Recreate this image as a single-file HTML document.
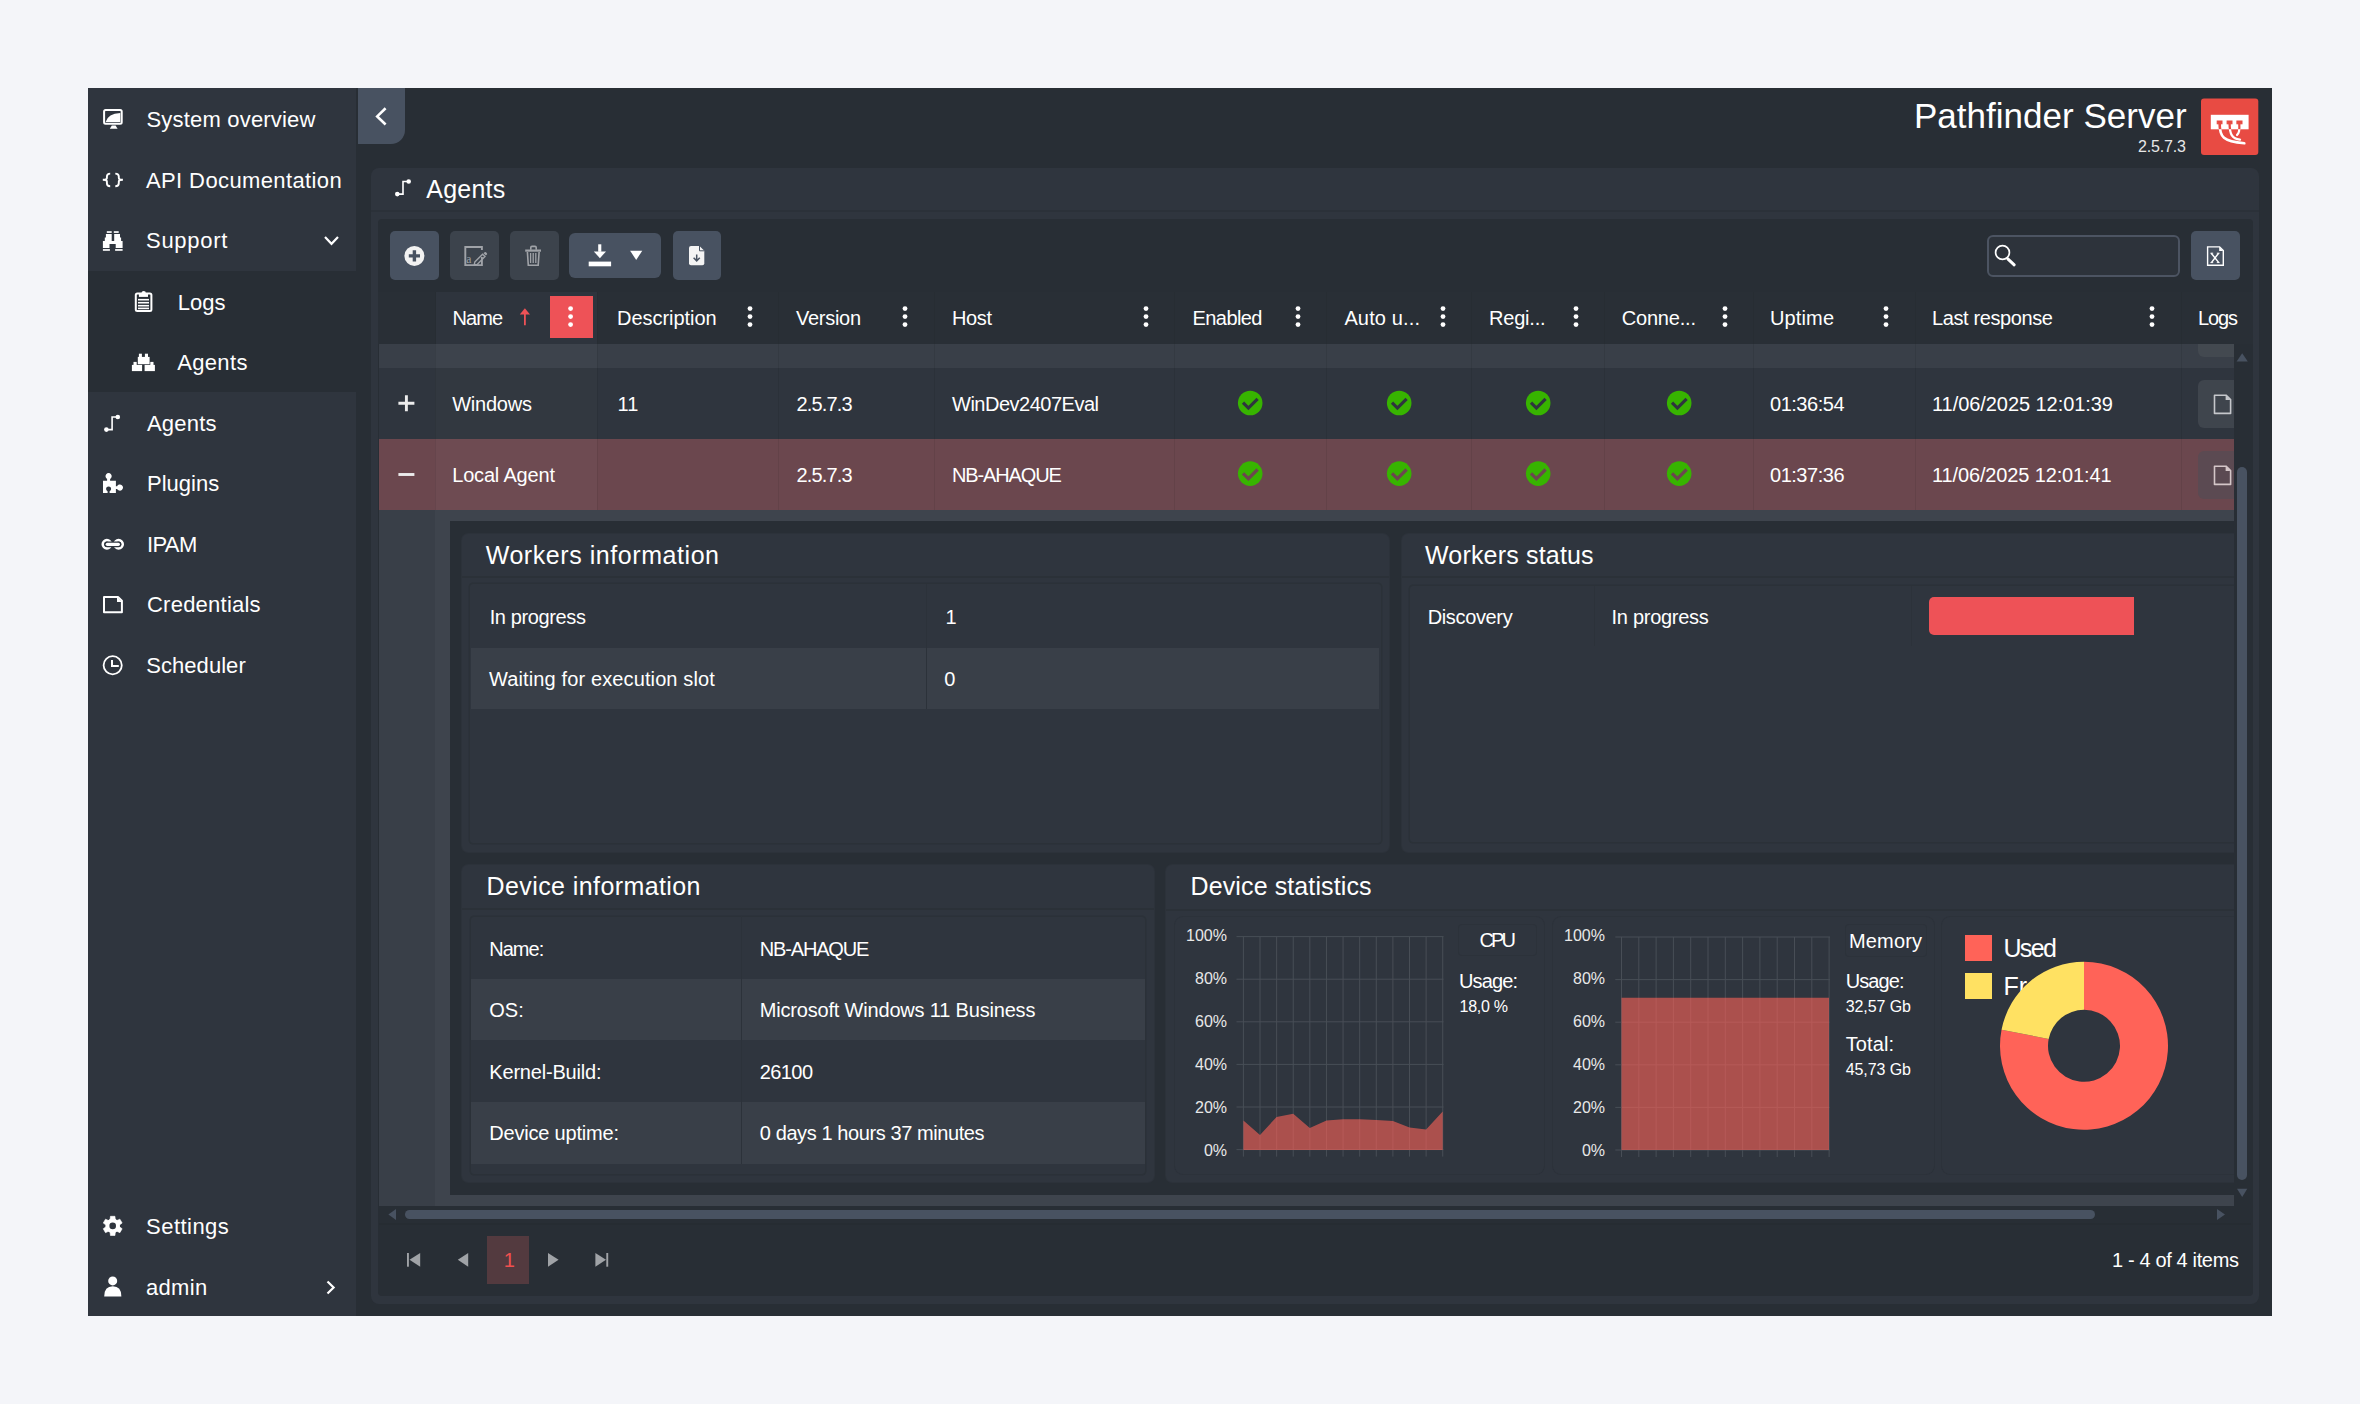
<!DOCTYPE html>
<html><head><meta charset="utf-8"><style>
html,body{margin:0;padding:0;}
body{width:2360px;height:1404px;overflow:hidden;position:relative;background:#f4f5f9;font-family:"Liberation Sans",sans-serif;}
body>div,body>svg{position:absolute;}
.t{white-space:nowrap;}
</style></head><body>
<div style="left:88px;top:88px;width:2184px;height:1228px;background:#282e35;"></div>
<div style="left:88px;top:88px;width:268px;height:1228px;background:#2f353e;"></div>
<div style="left:88px;top:271px;width:268px;height:121px;background:#282e35;"></div>
<div class="t" style="left:146.50px;top:109px;font-size:22px;line-height:22px;color:#fff;letter-spacing:0.189px;">System overview</div>
<div class="t" style="left:146.00px;top:170px;font-size:22px;line-height:22px;color:#fff;letter-spacing:0.384px;">API Documentation</div>
<div class="t" style="left:146.00px;top:230px;font-size:22px;line-height:22px;color:#fff;letter-spacing:0.708px;">Support</div>
<div class="t" style="left:147.00px;top:413px;font-size:22px;line-height:22px;color:#fff;letter-spacing:0.200px;">Agents</div>
<div class="t" style="left:147.00px;top:473px;font-size:22px;line-height:22px;color:#fff;">Plugins</div>
<div class="t" style="left:147.00px;top:534px;font-size:22px;line-height:22px;color:#fff;letter-spacing:-0.650px;">IPAM</div>
<div class="t" style="left:147.00px;top:594px;font-size:22px;line-height:22px;color:#fff;letter-spacing:0.230px;">Credentials</div>
<div class="t" style="left:146.30px;top:655px;font-size:22px;line-height:22px;color:#fff;letter-spacing:0.044px;">Scheduler</div>
<div class="t" style="left:146.10px;top:1216px;font-size:22px;line-height:22px;color:#fff;letter-spacing:0.457px;">Settings</div>
<div class="t" style="left:146.10px;top:1277px;font-size:22px;line-height:22px;color:#fff;letter-spacing:0.275px;">admin</div>
<div class="t" style="left:177.80px;top:292px;font-size:22px;line-height:22px;color:#fff;">Logs</div>
<div class="t" style="left:177.20px;top:352px;font-size:22px;line-height:22px;color:#fff;letter-spacing:0.340px;">Agents</div>
<svg style="left:100px;top:106px;" width="26" height="26" viewBox="100 106 26 26"><rect x="104.1" y="110.1" width="17.6" height="13.6" rx="1.5" fill="none" stroke="#fff" stroke-width="2"/><path d="M105.6 121.9 Q108 113.5 120.3 112.9 V121.9 Z" fill="#fff"/><path d="M109.8 128.8 L111.8 125.4 H115.6 L117.6 128.8 Z" fill="#fff"/></svg>
<svg style="left:100px;top:170px;" width="26" height="20" viewBox="100 170 26 20"><path d="M110.2 173.6 Q106.9 173.6 106.9 176.6 V178 Q106.9 179.8 102.8 179.8 Q106.9 179.8 106.9 181.6 V183.2 Q106.9 186.2 110.2 186.2" fill="none" stroke="#fff" stroke-width="1.9"/><path d="M115.3 173.6 Q118.8 173.6 118.8 176.6 V178 Q118.8 179.8 122.9 179.8 Q118.8 179.8 118.8 181.6 V183.2 Q118.8 186.2 115.3 186.2" fill="none" stroke="#fff" stroke-width="1.9"/></svg>
<svg style="left:98px;top:225px;" width="30" height="30" viewBox="98 225 30 30"><g transform="translate(98 225)" fill="#fff"><rect x="8.8" y="6.2" width="4.9" height="1.7"/><rect x="15.8" y="6.2" width="4.9" height="1.7"/><path d="M7.9 9 H13.7 V16 H16.2 V9 H22 V12.4 H23.1 V16 H24.6 V23.1 H17.7 V19 H11.5 V23.1 H4.9 V16 H6.8 V12.4 H7.9 Z"/><rect x="4.9" y="24.1" width="7" height="1.7"/><rect x="17.1" y="24.1" width="7.5" height="1.7"/></g></svg>
<svg style="left:320px;top:232px;" width="24" height="18" viewBox="320 232 24 18"><path d="M325 237 L331.5 243.8 L338 237" fill="none" stroke="#fff" stroke-width="2.2"/></svg>
<svg style="left:128px;top:286px;" width="32" height="32" viewBox="128 286 32 32"><g transform="translate(128 286)"><rect x="7.8" y="7.4" width="15.6" height="17.6" rx="1.5" fill="none" stroke="#fff" stroke-width="2"/><circle cx="15.7" cy="7.2" r="2.2" fill="#fff"/><rect x="10.9" y="7.5" width="9.1" height="3.4" fill="#fff"/><rect x="10" y="12.9" width="11" height="1.6" fill="#fff"/><rect x="10" y="15.9" width="11" height="1.6" fill="#fff"/><rect x="10" y="18.9" width="11" height="1.6" fill="#fff"/><rect x="10" y="21.6" width="11" height="1.6" fill="#fff"/></g></svg>
<svg style="left:128px;top:346px;" width="32" height="32" viewBox="128 346 32 32"><g transform="translate(128 346)" fill="#fff"><rect x="9.8" y="10.9" width="11.8" height="7.3"/><rect x="10.9" y="7.7" width="3" height="3.3"/><rect x="16.9" y="7.7" width="3.1" height="3.3"/><rect x="3.9" y="18.9" width="10.2" height="6.2"/><rect x="5.5" y="15.9" width="3.2" height="3.1"/><rect x="16.6" y="18.9" width="10.3" height="6.2"/><rect x="22.3" y="15.9" width="3.2" height="3.1"/></g></svg>
<svg style="left:98px;top:408px;" width="28" height="28" viewBox="98 408 28 28"><g transform="translate(98 408) scale(1.0)"><path d="M8.4 21.6 H14.1 V9 H19.8" fill="none" stroke="#fff" stroke-width="1.6"/><circle cx="19.8" cy="9" r="2.3" fill="#fff"/><circle cx="8.4" cy="21.6" r="2.3" fill="#fff"/></g></svg>
<svg style="left:96px;top:468px;" width="34" height="34" viewBox="96 468 34 34"><g transform="translate(96 468)"><path fill="#fff" fill-rule="evenodd" d="M7 12.7 H11.1 V10.9 A3.1 3.1 0 1 1 14.1 10.9 V12.7 H19.9 V18.3 H21.1 A3.1 3.1 0 1 1 21.1 20.9 H19.9 V25.1 H13.6 V23.2 A2.5 2.5 0 1 0 11.6 23.2 V25.1 H7 Z"/></g></svg>
<svg style="left:96px;top:527px;" width="34" height="34" viewBox="96 527 34 34"><g transform="translate(96 527)"><circle cx="10.9" cy="17.25" r="4.1" fill="none" stroke="#fff" stroke-width="2.7"/><circle cx="22.6" cy="17.25" r="4.1" fill="none" stroke="#fff" stroke-width="2.7"/><rect x="8.3" y="14.4" width="17" height="5.8" rx="2.9" fill="#2f353e"/><rect x="9.7" y="15.7" width="14.3" height="3.3" rx="1.65" fill="#fff"/></g></svg>
<svg style="left:96px;top:587px;" width="34" height="34" viewBox="96 587 34 34"><g transform="translate(96 587)"><path d="M8 10 H22 L25.9 13.8 V25.2 H8 Z" fill="none" stroke="#fff" stroke-width="2" stroke-linejoin="round"/><path d="M21 10 L25.9 14.9 H21 Z" fill="#fff"/></g></svg>
<svg style="left:96px;top:648px;" width="34" height="34" viewBox="96 648 34 34"><g transform="translate(96 648)"><circle cx="16.7" cy="17.3" r="9.1" fill="none" stroke="#fff" stroke-width="1.8"/><path d="M16 11.9 V17.9 H22.8" fill="none" stroke="#fff" stroke-width="2"/></g></svg>
<svg style="left:96px;top:1209px;" width="34" height="34" viewBox="96 1209 34 34"><polygon points="110.05,1220.10 115.35,1220.10 114.95,1216.30 110.45,1216.30" fill="#fff" stroke="#fff" stroke-width="0.6" stroke-linejoin="round"/><polygon points="106.35,1225.29 109.00,1220.71 105.51,1219.15 103.26,1223.05" fill="#fff" stroke="#fff" stroke-width="0.6" stroke-linejoin="round"/><polygon points="109.00,1231.09 106.35,1226.51 103.26,1228.75 105.51,1232.65" fill="#fff" stroke="#fff" stroke-width="0.6" stroke-linejoin="round"/><polygon points="115.35,1231.70 110.05,1231.70 110.45,1235.50 114.95,1235.50" fill="#fff" stroke="#fff" stroke-width="0.6" stroke-linejoin="round"/><polygon points="119.05,1226.51 116.40,1231.09 119.89,1232.65 122.14,1228.75" fill="#fff" stroke="#fff" stroke-width="0.6" stroke-linejoin="round"/><polygon points="116.40,1220.71 119.05,1225.29 122.14,1223.05 119.89,1219.15" fill="#fff" stroke="#fff" stroke-width="0.6" stroke-linejoin="round"/><circle cx="112.7" cy="1225.9" r="5.3" fill="none" stroke="#fff" stroke-width="4"/></svg>
<svg style="left:96px;top:1270px;" width="34" height="34" viewBox="96 1270 34 34"><circle cx="112.7" cy="1280.9" r="4.5" fill="#fff"/><path d="M104.2 1296.4 Q104.2 1286.2 112.8 1286.2 Q121.4 1286.2 121.4 1296.4 Z" fill="#fff"/></svg>
<svg style="left:322px;top:1278px;" width="20" height="20" viewBox="322 1278 20 20"><path d="M327.5 1281.5 L333.6 1287.5 L327.5 1293.5" fill="none" stroke="#fff" stroke-width="2.2"/></svg>
<div style="left:358px;top:88px;width:47px;height:56px;background:#485261;border-bottom-right-radius:14px;"></div>
<svg style="left:370px;top:104px;" width="22" height="24" viewBox="370 104 22 24"><path d="M385.6 108.3 L377.2 116.4 L385.6 124.5" fill="none" stroke="#fff" stroke-width="2.6"/></svg>
<div class="t" style="left:1914.00px;top:98px;font-size:35px;line-height:35px;color:#fff;letter-spacing:0.016px;">Pathfinder Server</div>
<div class="t" style="left:2138.00px;top:139px;font-size:16px;line-height:16px;color:#e8e8e8;letter-spacing:-0.192px;">2.5.7.3</div>
<svg style="left:2198px;top:95px;" width="64" height="64" viewBox="2198 95 64 64"><defs><clipPath id="cb"><rect x="2210.8" y="114.8" width="37.8" height="14.5"/></clipPath><clipPath id="co"><path d="M2201 98 H2259 V156 H2201 Z M2210.8 114.8 V129.3 H2248.6 V114.8 Z" clip-rule="evenodd"/></clipPath></defs><rect x="2201" y="98.4" width="57.3" height="56.6" rx="3" fill="#e84b43"/><rect x="2210.8" y="114.8" width="37.8" height="14.5" fill="#fff"/><g clip-path="url(#cb)" stroke="#e84b43" fill="#e84b43"><rect x="2217.2" y="121" width="4.8" height="2.8"/><rect x="2227.1" y="121" width="4.9" height="2.8"/><rect x="2236.9" y="121" width="5.1" height="2.8"/><path d="M2219.7 124 C2219.7 137 2223 141.5 2244.3 143.3" fill="none" stroke-width="2.6" stroke-linecap="round"/><path d="M2229.6 124 C2229.8 134.5 2232 138.8 2240 139.7" fill="none" stroke-width="2.3" stroke-linecap="round"/><path d="M2239.3 124 C2239.5 131 2239.2 132.5 2237 135" fill="none" stroke-width="2.2" stroke-linecap="round"/></g><g clip-path="url(#co)" stroke="#fff"><path d="M2219.7 124 C2219.7 137 2223 141.5 2244.3 143.3" fill="none" stroke-width="2.6" stroke-linecap="round"/><path d="M2229.6 124 C2229.8 134.5 2232 138.8 2240 139.7" fill="none" stroke-width="2.3" stroke-linecap="round"/><path d="M2239.3 124 C2239.5 131 2239.2 132.5 2237 135" fill="none" stroke-width="2.2" stroke-linecap="round"/></g></svg>
<div style="left:371px;top:168px;width:1888px;height:1136px;background:#2f353e;border-radius:8px;"></div>
<div style="left:371px;top:210px;width:1888px;height:2px;background:#2b3139;"></div>
<svg style="left:390px;top:172px;" width="26" height="28" viewBox="390 172 26 28"><g transform="translate(388.9 172.5) scale(1.0)"><path d="M8.4 21.6 H14.1 V9 H19.8" fill="none" stroke="#fff" stroke-width="1.6"/><circle cx="19.8" cy="9" r="2.3" fill="#fff"/><circle cx="8.4" cy="21.6" r="2.3" fill="#fff"/></g></svg>
<div class="t" style="left:426.30px;top:177px;font-size:25px;line-height:25px;color:#fff;letter-spacing:0.230px;">Agents</div>
<div style="left:378px;top:219px;width:1874.5px;height:1077px;background:#282e35;border-radius:4px;"></div>
<div style="left:390px;top:231px;width:49px;height:49px;background:#485261;border-radius:5px;"></div>
<svg style="left:400px;top:241px;" width="30" height="30" viewBox="400 241 30 30"><circle cx="414.4" cy="255.9" r="10" fill="#f2f2f2"/><path d="M408.8 255.9 H420 M414.4 250.3 V261.5" stroke="#485261" stroke-width="3.4"/></svg>
<div style="left:450px;top:231px;width:49px;height:49px;background:#3c434c;border-radius:5px;"></div>
<svg style="left:455px;top:240px;" width="38" height="32" viewBox="455 240 38 32"><path d="M481.9 250 V247 H465.3 V265.1 H481.9 V257" fill="none" stroke="#a0a3a8" stroke-width="1.9"/><path d="M474.8 262 L482.6 254.2 L485 256.6 L477.2 264.4 L474.2 265 Z" fill="none" stroke="#a0a3a8" stroke-width="1.4"/><path d="M483.5 253.3 L484.6 252.2 Q485.3 251.6 486 252.3 L486.9 253.2 Q487.5 253.9 486.9 254.6 L485.9 255.6 Z" fill="#a0a3a8"/><text x="466.3" y="263" font-family="Liberation Serif" font-size="11.5" fill="#a0a3a8">a</text></svg>
<div style="left:510px;top:231px;width:49px;height:49px;background:#3c434c;border-radius:5px;"></div>
<svg style="left:518px;top:240px;" width="32" height="32" viewBox="518 240 32 32"><path d="M530.8 249.8 V247.6 Q530.8 246.4 532 246.4 H535 Q536.2 246.4 536.2 247.6 V249.8" fill="none" stroke="#a0a3a8" stroke-width="1.6"/><rect x="525.2" y="249.5" width="15.8" height="2.2" fill="#a0a3a8"/><path d="M527.4 252 L528.3 265.3 H538.2 L539.1 252" fill="none" stroke="#a0a3a8" stroke-width="1.6"/><path d="M530.6 253 V263 M533.2 253 V263 M535.8 253 V263" stroke="#a0a3a8" stroke-width="1.3"/></svg>
<div style="left:569px;top:233px;width:92px;height:45px;background:#485261;border-radius:6px;"></div>
<svg style="left:585px;top:240px;" width="62" height="30" viewBox="585 240 62 30"><rect x="598.2" y="244.3" width="3.1" height="7.5" fill="#fff"/><path d="M593.8 251.4 H606 L599.9 258.2 Z" fill="#fff"/><rect x="588.7" y="261.6" width="22.4" height="4.7" fill="#fff"/><path d="M630.1 250.7 H642.3 L636.2 259.9 Z" fill="#fff"/></svg>
<div style="left:673px;top:231px;width:48px;height:49px;background:#485261;border-radius:5px;"></div>
<svg style="left:684px;top:242px;" width="26" height="28" viewBox="684 242 26 28"><path d="M691 246 H699.5 L704.3 250.8 V263.3 Q704.3 265.3 702.3 265.3 H691 Q689 265.3 689 263.3 V248 Q689 246 691 246 Z" fill="#f4f4f4"/><path d="M699.5 246 V250.8 H704.3" fill="none" stroke="#485261" stroke-width="1"/><path d="M696.7 254.4 V260.5 M693.6 257.8 L696.7 260.9 L699.8 257.8" fill="none" stroke="#485261" stroke-width="1.5"/></svg>
<div style="left:1986.5px;top:234.6px;width:193.4px;height:42px;background:#2d333b;border:2px solid #4c5462;border-radius:6px;box-sizing:border-box;"></div>
<svg style="left:1990px;top:240px;" width="32" height="32" viewBox="1990 240 32 32"><circle cx="2002.5" cy="252.5" r="6.9" fill="none" stroke="#fff" stroke-width="1.7"/><path d="M2007.8 258.8 L2014.2 264.8" stroke="#fff" stroke-width="3" stroke-linecap="round"/></svg>
<div style="left:2191px;top:231px;width:48.5px;height:48.6px;background:#485261;border-radius:5px;"></div>
<svg style="left:2200px;top:240px;" width="32" height="32" viewBox="2200 240 32 32"><path d="M2207.6 246.9 H2219.6 L2223.3 250.6 V265.3 H2207.6 Z" fill="none" stroke="#fff" stroke-width="1.4"/><path d="M2219.2 246.9 V251 H2223.3" fill="#fff"/><path d="M2211.2 253.2 L2218.8 262.6 M2218.6 253.2 L2211.4 262.6" stroke="#fff" stroke-width="1.5"/><path d="M2210.4 253.2 H2213.2 M2216.8 253.2 H2219.6 M2210.4 262.6 H2213.2 M2216.8 262.6 H2219.6" stroke="#fff" stroke-width="0.9"/></svg>
<div style="left:378px;top:292px;width:1874.5px;height:52px;background:#292f36;"></div>
<div style="left:434.5px;top:292px;width:162.8px;height:52px;background:#2e343d;"></div>
<div style="left:434.5px;top:292px;width:1px;height:52px;background:#272d33;"></div>
<div style="left:597.3px;top:292px;width:1px;height:52px;background:#272d33;"></div>
<div style="left:777.6px;top:292px;width:1px;height:52px;background:#272d33;"></div>
<div style="left:933.5px;top:292px;width:1px;height:52px;background:#272d33;"></div>
<div style="left:1173.6px;top:292px;width:1px;height:52px;background:#272d33;"></div>
<div style="left:1326px;top:292px;width:1px;height:52px;background:#272d33;"></div>
<div style="left:1470.5px;top:292px;width:1px;height:52px;background:#272d33;"></div>
<div style="left:1604px;top:292px;width:1px;height:52px;background:#272d33;"></div>
<div style="left:1752.8px;top:292px;width:1px;height:52px;background:#272d33;"></div>
<div style="left:1914.8px;top:292px;width:1px;height:52px;background:#272d33;"></div>
<div style="left:2180.8px;top:292px;width:1px;height:52px;background:#272d33;"></div>
<div class="t" style="left:452.60px;top:308px;font-size:20px;line-height:20px;color:#fff;letter-spacing:-0.917px;">Name</div>
<div class="t" style="left:617.00px;top:308px;font-size:20px;line-height:20px;color:#fff;letter-spacing:-0.045px;">Description</div>
<div class="t" style="left:796.00px;top:308px;font-size:20px;line-height:20px;color:#fff;letter-spacing:-0.283px;">Version</div>
<div class="t" style="left:952.00px;top:308px;font-size:20px;line-height:20px;color:#fff;letter-spacing:-0.367px;">Host</div>
<div class="t" style="left:1192.50px;top:308px;font-size:20px;line-height:20px;color:#fff;letter-spacing:-0.567px;">Enabled</div>
<div class="t" style="left:1344.40px;top:308px;font-size:20px;line-height:20px;color:#fff;letter-spacing:0.137px;">Auto u...</div>
<div class="t" style="left:1489.00px;top:308px;font-size:20px;line-height:20px;color:#fff;letter-spacing:-0.200px;">Regi...</div>
<div class="t" style="left:1621.70px;top:308px;font-size:20px;line-height:20px;color:#fff;letter-spacing:-0.186px;">Conne...</div>
<div class="t" style="left:1770.00px;top:308px;font-size:20px;line-height:20px;color:#fff;letter-spacing:0.130px;">Uptime</div>
<div class="t" style="left:1932.00px;top:308px;font-size:20px;line-height:20px;color:#fff;letter-spacing:-0.388px;">Last response</div>
<div class="t" style="left:2198.00px;top:308px;font-size:20px;line-height:20px;color:#fff;letter-spacing:-1.117px;">Logs</div>
<div style="left:550px;top:296px;width:43px;height:42px;background:#ee5257;"></div>
<svg style="left:560px;top:300px;" width="22" height="34" viewBox="560 300 22 34"><circle cx="570.6" cy="308.6" r="2.4" fill="#fff"/><circle cx="570.6" cy="316.6" r="2.4" fill="#fff"/><circle cx="570.6" cy="324.6" r="2.4" fill="#fff"/></svg>
<svg style="left:742px;top:300px;" width="16" height="34" viewBox="742 300 16 34"><circle cx="750" cy="308.6" r="2.4" fill="#fff"/><circle cx="750" cy="316.6" r="2.4" fill="#fff"/><circle cx="750" cy="324.6" r="2.4" fill="#fff"/></svg>
<svg style="left:897px;top:300px;" width="16" height="34" viewBox="897 300 16 34"><circle cx="905" cy="308.6" r="2.4" fill="#fff"/><circle cx="905" cy="316.6" r="2.4" fill="#fff"/><circle cx="905" cy="324.6" r="2.4" fill="#fff"/></svg>
<svg style="left:1138px;top:300px;" width="16" height="34" viewBox="1138 300 16 34"><circle cx="1146" cy="308.6" r="2.4" fill="#fff"/><circle cx="1146" cy="316.6" r="2.4" fill="#fff"/><circle cx="1146" cy="324.6" r="2.4" fill="#fff"/></svg>
<svg style="left:1290.3px;top:300px;" width="16" height="34" viewBox="1290.3 300 16 34"><circle cx="1298.3" cy="308.6" r="2.4" fill="#fff"/><circle cx="1298.3" cy="316.6" r="2.4" fill="#fff"/><circle cx="1298.3" cy="324.6" r="2.4" fill="#fff"/></svg>
<svg style="left:1434.9px;top:300px;" width="16" height="34" viewBox="1434.9 300 16 34"><circle cx="1442.9" cy="308.6" r="2.4" fill="#fff"/><circle cx="1442.9" cy="316.6" r="2.4" fill="#fff"/><circle cx="1442.9" cy="324.6" r="2.4" fill="#fff"/></svg>
<svg style="left:1568.3px;top:300px;" width="16" height="34" viewBox="1568.3 300 16 34"><circle cx="1576.3" cy="308.6" r="2.4" fill="#fff"/><circle cx="1576.3" cy="316.6" r="2.4" fill="#fff"/><circle cx="1576.3" cy="324.6" r="2.4" fill="#fff"/></svg>
<svg style="left:1716.6px;top:300px;" width="16" height="34" viewBox="1716.6 300 16 34"><circle cx="1724.6" cy="308.6" r="2.4" fill="#fff"/><circle cx="1724.6" cy="316.6" r="2.4" fill="#fff"/><circle cx="1724.6" cy="324.6" r="2.4" fill="#fff"/></svg>
<svg style="left:1878px;top:300px;" width="16" height="34" viewBox="1878 300 16 34"><circle cx="1886" cy="308.6" r="2.4" fill="#fff"/><circle cx="1886" cy="316.6" r="2.4" fill="#fff"/><circle cx="1886" cy="324.6" r="2.4" fill="#fff"/></svg>
<svg style="left:2144px;top:300px;" width="16" height="34" viewBox="2144 300 16 34"><circle cx="2152" cy="308.6" r="2.4" fill="#fff"/><circle cx="2152" cy="316.6" r="2.4" fill="#fff"/><circle cx="2152" cy="324.6" r="2.4" fill="#fff"/></svg>
<svg style="left:515px;top:303px;" width="20" height="26" viewBox="515 303 20 26"><path d="M524.9 311 V325.2" stroke="#ee5257" stroke-width="1.8"/><path d="M519.8 314.5 L524.9 308.2 L530 314.5 Z" fill="#ee5257"/></svg>
<div style="left:379px;top:344px;width:1855px;height:24px;background:#393f48;"></div>
<div style="left:434.5px;top:344px;width:162.8px;height:24px;background:#3d434c;"></div>
<div style="left:379px;top:368px;width:1855px;height:71px;background:#2f353e;"></div>
<div style="left:434.5px;top:368px;width:162.8px;height:71px;background:#323840;"></div>
<div style="left:379px;top:439px;width:1855px;height:71px;background:#6b474e;"></div>
<div style="left:434.5px;top:439px;width:162.8px;height:71px;background:#6e4b52;"></div>
<div style="left:434.5px;top:344px;width:1px;height:166px;background:rgba(0,0,0,0.07);"></div>
<div style="left:597.3px;top:344px;width:1px;height:166px;background:rgba(0,0,0,0.07);"></div>
<div style="left:777.6px;top:344px;width:1px;height:166px;background:rgba(0,0,0,0.07);"></div>
<div style="left:933.5px;top:344px;width:1px;height:166px;background:rgba(0,0,0,0.07);"></div>
<div style="left:1173.6px;top:344px;width:1px;height:166px;background:rgba(0,0,0,0.07);"></div>
<div style="left:1326px;top:344px;width:1px;height:166px;background:rgba(0,0,0,0.07);"></div>
<div style="left:1470.5px;top:344px;width:1px;height:166px;background:rgba(0,0,0,0.07);"></div>
<div style="left:1604px;top:344px;width:1px;height:166px;background:rgba(0,0,0,0.07);"></div>
<div style="left:1752.8px;top:344px;width:1px;height:166px;background:rgba(0,0,0,0.07);"></div>
<div style="left:1914.8px;top:344px;width:1px;height:166px;background:rgba(0,0,0,0.07);"></div>
<div style="left:2180.8px;top:344px;width:1px;height:166px;background:rgba(0,0,0,0.07);"></div>
<svg style="left:396px;top:393px;" width="20" height="20" viewBox="396 393 20 20"><path d="M398.4 403.3 H414.4 M406.4 395.3 V411.3" stroke="#ececec" stroke-width="2.9"/></svg>
<svg style="left:396px;top:464px;" width="20" height="20" viewBox="396 464 20 20"><path d="M398.4 474.5 H414.4" stroke="#ececec" stroke-width="2.9"/></svg>
<div class="t" style="left:452.20px;top:394px;font-size:20px;line-height:20px;color:#fff;letter-spacing:-0.225px;">Windows</div>
<div class="t" style="left:617.60px;top:394px;font-size:20px;line-height:20px;color:#fff;">11</div>
<div class="t" style="left:796.60px;top:394px;font-size:20px;line-height:20px;color:#fff;letter-spacing:-0.875px;">2.5.7.3</div>
<div class="t" style="left:952.00px;top:394px;font-size:20px;line-height:20px;color:#fff;letter-spacing:-0.492px;">WinDev2407Eval</div>
<div class="t" style="left:1770.00px;top:394px;font-size:20px;line-height:20px;color:#fff;letter-spacing:-0.479px;">01:36:54</div>
<div class="t" style="left:1932.00px;top:394px;font-size:20px;line-height:20px;color:#fff;letter-spacing:-0.058px;">11/06/2025 12:01:39</div>
<div class="t" style="left:452.20px;top:465px;font-size:20px;line-height:20px;color:#fff;letter-spacing:-0.175px;">Local Agent</div>
<div class="t" style="left:796.60px;top:465px;font-size:20px;line-height:20px;color:#fff;letter-spacing:-0.875px;">2.5.7.3</div>
<div class="t" style="left:952.00px;top:465px;font-size:20px;line-height:20px;color:#fff;letter-spacing:-1.138px;">NB-AHAQUE</div>
<div class="t" style="left:1770.00px;top:465px;font-size:20px;line-height:20px;color:#fff;letter-spacing:-0.479px;">01:37:36</div>
<div class="t" style="left:1932.00px;top:465px;font-size:20px;line-height:20px;color:#fff;letter-spacing:-0.136px;">11/06/2025 12:01:41</div>
<svg style="left:1236.3px;top:389px;" width="28" height="100" viewBox="1236.3 389 28 100"><circle cx="1250.5" cy="403" r="12.3" fill="#37b400"/><path d="M1243.3 402.7 L1248.7 408.1 L1257.9 398.9" fill="none" stroke="#2f353e" stroke-width="3.2"/><circle cx="1250.5" cy="473.6" r="12.3" fill="#37b400"/><path d="M1243.3 473.3 L1248.7 478.7 L1257.9 469.5" fill="none" stroke="#6b474e" stroke-width="3.2"/></svg>
<svg style="left:1384.6px;top:389px;" width="28" height="100" viewBox="1384.6 389 28 100"><circle cx="1398.8" cy="403" r="12.3" fill="#37b400"/><path d="M1391.6 402.7 L1397.0 408.1 L1406.2 398.9" fill="none" stroke="#2f353e" stroke-width="3.2"/><circle cx="1398.8" cy="473.6" r="12.3" fill="#37b400"/><path d="M1391.6 473.3 L1397.0 478.7 L1406.2 469.5" fill="none" stroke="#6b474e" stroke-width="3.2"/></svg>
<svg style="left:1523.5px;top:389px;" width="28" height="100" viewBox="1523.5 389 28 100"><circle cx="1537.7" cy="403" r="12.3" fill="#37b400"/><path d="M1530.5 402.7 L1535.9 408.1 L1545.1 398.9" fill="none" stroke="#2f353e" stroke-width="3.2"/><circle cx="1537.7" cy="473.6" r="12.3" fill="#37b400"/><path d="M1530.5 473.3 L1535.9 478.7 L1545.1 469.5" fill="none" stroke="#6b474e" stroke-width="3.2"/></svg>
<svg style="left:1664.5px;top:389px;" width="28" height="100" viewBox="1664.5 389 28 100"><circle cx="1678.7" cy="403" r="12.3" fill="#37b400"/><path d="M1671.5 402.7 L1676.9 408.1 L1686.1 398.9" fill="none" stroke="#2f353e" stroke-width="3.2"/><circle cx="1678.7" cy="473.6" r="12.3" fill="#37b400"/><path d="M1671.5 473.3 L1676.9 478.7 L1686.1 469.5" fill="none" stroke="#6b474e" stroke-width="3.2"/></svg>
<div style="left:2198px;top:344px;width:36px;height:13px;background:#434950;border-radius:0 0 0 6px;"></div>
<div style="left:2198px;top:380px;width:36px;height:47.5px;background:#3f454d;border-radius:6px 0 0 6px;"></div>
<div style="left:2198px;top:451px;width:36px;height:47.5px;background:#5b4a52;border-radius:6px 0 0 6px;"></div>
<svg style="left:2205px;top:388px;" width="29" height="100" viewBox="2205 388 29 100"><path d="M2214.5 395.2 H2226 L2230.6 399.59999999999997 V413.4 H2214.5 Z" fill="none" stroke="#c5c7cb" stroke-width="1.6" stroke-linejoin="round"/><path d="M2225.6 395.2 L2230.6 400.0 H2225.6 Z" fill="#c5c7cb"/><path d="M2214.5 466.2 H2226 L2230.6 470.59999999999997 V484.4 H2214.5 Z" fill="none" stroke="#d4c6c8" stroke-width="1.6" stroke-linejoin="round"/><path d="M2225.6 466.2 L2230.6 471.0 H2225.6 Z" fill="#d4c6c8"/></svg>
<div style="left:379px;top:510px;width:1855px;height:696px;background:#393f48;"></div>
<div style="left:434.5px;top:510px;width:1799.5px;height:696px;background:#3e444d;"></div>
<div style="left:450.3px;top:521px;width:1784px;height:674px;background:#282e35;"></div>
<div style="left:461.5px;top:533.5px;width:927px;height:318px;background:#2f353e;border-radius:6px;box-shadow:0 0 0 1px #2c323a;"></div>
<div style="left:1401.5px;top:533.5px;width:833px;height:318px;background:#2f353e;border-radius:6px 0 0 6px;box-shadow:0 0 0 1px #2c323a;"></div>
<div style="left:461.5px;top:864.5px;width:692.5px;height:317px;background:#2f353e;border-radius:6px;box-shadow:0 0 0 1px #2c323a;"></div>
<div style="left:1166.2px;top:864.5px;width:1068px;height:317px;background:#2f353e;border-radius:6px 0 0 6px;box-shadow:0 0 0 1px #2c323a;"></div>
<div style="left:461.5px;top:576px;width:927px;height:2px;background:#2b3138;"></div>
<div style="left:1401.5px;top:576px;width:833px;height:2px;background:#2b3138;"></div>
<div style="left:461.5px;top:907.5px;width:692.5px;height:2px;background:#2b3138;"></div>
<div style="left:1166.2px;top:908.5px;width:1068px;height:2px;background:#2b3138;"></div>
<div class="t" style="left:485.70px;top:543px;font-size:25px;line-height:25px;color:#fff;letter-spacing:0.561px;">Workers information</div>
<div class="t" style="left:1425.00px;top:543px;font-size:25px;line-height:25px;color:#fff;letter-spacing:0.181px;">Workers status</div>
<div class="t" style="left:486.60px;top:874px;font-size:25px;line-height:25px;color:#fff;letter-spacing:0.403px;">Device information</div>
<div class="t" style="left:1190.60px;top:874px;font-size:25px;line-height:25px;color:#fff;letter-spacing:0.106px;">Device statistics</div>
<div style="left:470.3px;top:584px;width:910.3px;height:258.5px;background:#2f353e;box-shadow:0 0 0 1.5px #2b3138;border-radius:3px;"></div>
<div style="left:471px;top:647.5px;width:908px;height:61px;background:#393f48;"></div>
<div style="left:926.2px;top:584px;width:1px;height:124.5px;background:#2c323a;"></div>
<div class="t" style="left:489.70px;top:607px;font-size:20px;line-height:20px;color:#fff;letter-spacing:-0.375px;">In progress</div>
<div class="t" style="left:489.00px;top:669px;font-size:20px;line-height:20px;color:#fff;letter-spacing:0.124px;">Waiting for execution slot</div>
<div class="t" style="left:945.40px;top:607px;font-size:20px;line-height:20px;color:#fff;">1</div>
<div class="t" style="left:944.30px;top:669px;font-size:20px;line-height:20px;color:#fff;">0</div>
<div style="left:1409.7px;top:585.5px;width:825px;height:256.5px;background:#2f353e;box-shadow:0 0 0 1.5px #2b3138;border-radius:3px 0 0 3px;"></div>
<div style="left:1593.6px;top:585.5px;width:1px;height:60px;background:#2c323a;"></div>
<div style="left:1911px;top:585.5px;width:1px;height:60px;background:#2c323a;"></div>
<div class="t" style="left:1427.70px;top:607px;font-size:20px;line-height:20px;color:#fff;letter-spacing:-0.350px;">Discovery</div>
<div class="t" style="left:1611.50px;top:607px;font-size:20px;line-height:20px;color:#fff;letter-spacing:-0.275px;">In progress</div>
<div style="left:1929.2px;top:597px;width:205.2px;height:37.7px;background:#ee5257;border-radius:5px 0 0 5px;"></div>
<div style="left:471px;top:916.5px;width:673.6px;height:257.2px;background:#2f353e;box-shadow:0 0 0 1.5px #2b3138;border-radius:3px;"></div>
<div style="left:471px;top:979px;width:673.6px;height:61px;background:#393f48;"></div>
<div style="left:471px;top:1101.5px;width:673.6px;height:62px;background:#393f48;"></div>
<div style="left:741px;top:916px;width:1px;height:247.6px;background:#2c323a;"></div>
<div class="t" style="left:489.30px;top:939px;font-size:20px;line-height:20px;color:#fff;letter-spacing:-1.000px;">Name:</div>
<div class="t" style="left:759.80px;top:939px;font-size:20px;line-height:20px;color:#fff;letter-spacing:-1.175px;">NB-AHAQUE</div>
<div class="t" style="left:489.30px;top:1000px;font-size:20px;line-height:20px;color:#fff;">OS:</div>
<div class="t" style="left:759.80px;top:1000px;font-size:20px;line-height:20px;color:#fff;letter-spacing:-0.187px;">Microsoft Windows 11 Business</div>
<div class="t" style="left:489.30px;top:1062px;font-size:20px;line-height:20px;color:#fff;letter-spacing:-0.192px;">Kernel-Build:</div>
<div class="t" style="left:759.80px;top:1062px;font-size:20px;line-height:20px;color:#fff;letter-spacing:-0.600px;">26100</div>
<div class="t" style="left:489.30px;top:1123px;font-size:20px;line-height:20px;color:#fff;letter-spacing:-0.200px;">Device uptime:</div>
<div class="t" style="left:759.80px;top:1123px;font-size:20px;line-height:20px;color:#fff;letter-spacing:-0.408px;">0 days 1 hours 37 minutes</div>
<div style="left:1175.3px;top:917.2px;width:369px;height:256.5px;background:#2f353e;border-radius:8px;box-shadow:0 0 0 1px #2c323a;"></div>
<div style="left:1552.5px;top:917.2px;width:381px;height:257.2px;background:#2f353e;border-radius:8px;box-shadow:0 0 0 1px #2c323a;"></div>
<div style="left:1942.3px;top:917.2px;width:292px;height:257.2px;background:#2f353e;border-radius:8px 0 0 8px;box-shadow:0 0 0 1px #2c323a;"></div>
<svg style="left:1180px;top:925px;" width="360" height="240" viewBox="1180 925 360 240"><rect x="1236.5" y="936.10" width="207.0" height="1" fill="#484e56"/><rect x="1236.5" y="978.70" width="207.0" height="1" fill="#484e56"/><rect x="1236.5" y="1021.30" width="207.0" height="1" fill="#484e56"/><rect x="1236.5" y="1063.90" width="207.0" height="1" fill="#484e56"/><rect x="1236.5" y="1106.50" width="207.0" height="1" fill="#484e56"/><rect x="1236.5" y="1149.10" width="207.0" height="1" fill="#484e56"/><rect x="1242.90" y="936.6" width="1" height="219.9999999999999" fill="#484e56"/><rect x="1259.51" y="936.6" width="1" height="219.9999999999999" fill="#484e56"/><rect x="1276.12" y="936.6" width="1" height="219.9999999999999" fill="#484e56"/><rect x="1292.73" y="936.6" width="1" height="219.9999999999999" fill="#484e56"/><rect x="1309.34" y="936.6" width="1" height="219.9999999999999" fill="#484e56"/><rect x="1325.95" y="936.6" width="1" height="219.9999999999999" fill="#484e56"/><rect x="1342.56" y="936.6" width="1" height="219.9999999999999" fill="#484e56"/><rect x="1359.17" y="936.6" width="1" height="219.9999999999999" fill="#484e56"/><rect x="1375.78" y="936.6" width="1" height="219.9999999999999" fill="#484e56"/><rect x="1392.39" y="936.6" width="1" height="219.9999999999999" fill="#484e56"/><rect x="1409.00" y="936.6" width="1" height="219.9999999999999" fill="#484e56"/><rect x="1425.61" y="936.6" width="1" height="219.9999999999999" fill="#484e56"/><rect x="1442.22" y="936.6" width="1" height="219.9999999999999" fill="#484e56"/><polygon points="1243.4,1150 1243.4,1120.4 1260.0,1135 1276.6,1116.9 1293.2,1113.8 1309.8,1128 1326.5,1120.4 1343.1,1119.2 1359.7,1119.2 1376.3,1120 1392.9,1120.9 1409.5,1127.5 1426.1,1129.6 1442.7,1111.5 1442.72,1150" fill="#ff6358" fill-opacity="0.6"/></svg>
<div class="t" style="left:1186.00px;top:928px;font-size:16px;line-height:16px;color:#e8e8e8;letter-spacing:0.033px;">100%</div>
<div class="t" style="left:1195.00px;top:971px;font-size:16px;line-height:16px;color:#e8e8e8;">80%</div>
<div class="t" style="left:1195.00px;top:1014px;font-size:16px;line-height:16px;color:#e8e8e8;">60%</div>
<div class="t" style="left:1195.00px;top:1057px;font-size:16px;line-height:16px;color:#e8e8e8;">40%</div>
<div class="t" style="left:1195.00px;top:1100px;font-size:16px;line-height:16px;color:#e8e8e8;">20%</div>
<div class="t" style="left:1204.00px;top:1143px;font-size:16px;line-height:16px;color:#e8e8e8;letter-spacing:-0.150px;">0%</div>
<svg style="left:1560px;top:925px;" width="280" height="240" viewBox="1560 925 280 240"><rect x="1615.3" y="936.50" width="214.70000000000005" height="1" fill="#484e56"/><rect x="1615.3" y="979.10" width="214.70000000000005" height="1" fill="#484e56"/><rect x="1615.3" y="1021.70" width="214.70000000000005" height="1" fill="#484e56"/><rect x="1615.3" y="1064.30" width="214.70000000000005" height="1" fill="#484e56"/><rect x="1615.3" y="1106.90" width="214.70000000000005" height="1" fill="#484e56"/><rect x="1615.3" y="1149.50" width="214.70000000000005" height="1" fill="#484e56"/><rect x="1621.00" y="937" width="1" height="220" fill="#484e56"/><rect x="1638.30" y="937" width="1" height="220" fill="#484e56"/><rect x="1655.60" y="937" width="1" height="220" fill="#484e56"/><rect x="1672.90" y="937" width="1" height="220" fill="#484e56"/><rect x="1690.20" y="937" width="1" height="220" fill="#484e56"/><rect x="1707.50" y="937" width="1" height="220" fill="#484e56"/><rect x="1724.80" y="937" width="1" height="220" fill="#484e56"/><rect x="1742.10" y="937" width="1" height="220" fill="#484e56"/><rect x="1759.40" y="937" width="1" height="220" fill="#484e56"/><rect x="1776.70" y="937" width="1" height="220" fill="#484e56"/><rect x="1794.00" y="937" width="1" height="220" fill="#484e56"/><rect x="1811.30" y="937" width="1" height="220" fill="#484e56"/><rect x="1828.60" y="937" width="1" height="220" fill="#484e56"/><polygon points="1621.5,1150 1621.5,997.8 1829,997.8 1829,1150" fill="#ff6358" fill-opacity="0.6"/></svg>
<div class="t" style="left:1564.00px;top:928px;font-size:16px;line-height:16px;color:#e8e8e8;letter-spacing:0.033px;">100%</div>
<div class="t" style="left:1573.00px;top:971px;font-size:16px;line-height:16px;color:#e8e8e8;">80%</div>
<div class="t" style="left:1573.00px;top:1014px;font-size:16px;line-height:16px;color:#e8e8e8;">60%</div>
<div class="t" style="left:1573.00px;top:1057px;font-size:16px;line-height:16px;color:#e8e8e8;">40%</div>
<div class="t" style="left:1573.00px;top:1100px;font-size:16px;line-height:16px;color:#e8e8e8;">20%</div>
<div class="t" style="left:1582.00px;top:1143px;font-size:16px;line-height:16px;color:#e8e8e8;letter-spacing:-0.150px;">0%</div>
<div style="left:1459px;top:925.3px;width:77px;height:30px;background:transparent;box-shadow:0 0 0 1px #2c323a;border-radius:3px;"></div>
<div class="t" style="left:1479.60px;top:930px;font-size:20px;line-height:20px;color:#fff;letter-spacing:-2.925px;">CPU</div>
<div class="t" style="left:1459.00px;top:971px;font-size:20px;line-height:20px;color:#fff;letter-spacing:-0.870px;">Usage:</div>
<div class="t" style="left:1459.60px;top:999px;font-size:16px;line-height:16px;color:#fff;letter-spacing:-0.280px;">18,0 %</div>
<div style="left:1845.7px;top:925px;width:80px;height:30.8px;background:transparent;box-shadow:0 0 0 1px #2c323a;border-radius:3px;"></div>
<div class="t" style="left:1849.00px;top:931px;font-size:20px;line-height:20px;color:#fff;letter-spacing:0.150px;">Memory</div>
<div class="t" style="left:1845.70px;top:971px;font-size:20px;line-height:20px;color:#fff;letter-spacing:-0.910px;">Usage:</div>
<div class="t" style="left:1845.70px;top:999px;font-size:16px;line-height:16px;color:#fff;letter-spacing:-0.079px;">32,57 Gb</div>
<div class="t" style="left:1845.70px;top:1034px;font-size:20px;line-height:20px;color:#fff;letter-spacing:0.100px;">Total:</div>
<div class="t" style="left:1845.70px;top:1062px;font-size:16px;line-height:16px;color:#fff;letter-spacing:-0.079px;">45,73 Gb</div>
<div style="left:1965px;top:935px;width:26.5px;height:26px;background:#ff6358;"></div>
<div style="left:1965px;top:973px;width:26.5px;height:26px;background:#ffe162;"></div>
<div class="t" style="left:2003.50px;top:936px;font-size:25px;line-height:25px;color:#fff;letter-spacing:-1.683px;">Used</div>
<div class="t" style="left:2003.50px;top:974px;font-size:25px;line-height:25px;color:#fff;">Free</div>
<svg style="left:1990px;top:955px;" width="190" height="180" viewBox="1990 955 190 180"><path d="M2084.00 961.80 A84 84 0 1 1 2001.54 1029.77 L2048.66 1038.93 A36 36 0 1 0 2084.00 1009.80 Z" fill="#ff6358"/><path d="M2001.54 1029.77 A84 84 0 0 1 2084.00 961.80 L2084.00 1009.80 A36 36 0 0 0 2048.66 1038.93 Z" fill="#ffe162"/></svg>
<div style="left:2234px;top:344px;width:17px;height:862px;background:#282e35;"></div>
<svg style="left:2234px;top:348px;" width="17" height="16" viewBox="2234 348 17 16"><path d="M2236.6 361.4 L2242.2 353.3 L2247.8 361.4 Z" fill="#485261"/></svg>
<div style="left:2237px;top:467px;width:10.3px;height:712.5px;background:#485261;border-radius:5px;"></div>
<svg style="left:2234px;top:1186px;" width="17" height="14" viewBox="2234 1186 17 14"><path d="M2237 1188.8 H2247.3 L2242.2 1197 Z" fill="#485261"/></svg>
<div style="left:379px;top:1206px;width:1872px;height:18px;background:#282e35;"></div>
<div style="left:379px;top:1223px;width:1872px;height:1.5px;background:#262c32;"></div>
<svg style="left:385px;top:1206px;" width="14" height="18" viewBox="385 1206 14 18"><path d="M396 1209 V1220 L388.4 1214.5 Z" fill="#485261"/></svg>
<div style="left:405px;top:1209.7px;width:1690px;height:9.5px;background:#485261;border-radius:5px;"></div>
<svg style="left:2214px;top:1206px;" width="14" height="18" viewBox="2214 1206 14 18"><path d="M2217 1209 V1220 L2225 1214.5 Z" fill="#485261"/></svg>
<svg style="left:400px;top:1245px;" width="220" height="30" viewBox="400 1245 220 30"><rect x="407" y="1253" width="1.9" height="13.7" fill="#a0a3a7"/><path d="M420.2 1253 V1266.7 L409.5 1259.85 Z" fill="#a0a3a7"/><path d="M468.2 1253 V1266.7 L457.8 1259.85 Z" fill="#a0a3a7"/><path d="M548 1253 V1266.7 L558.6 1259.85 Z" fill="#a0a3a7"/><path d="M595.4 1253 V1266.7 L606 1259.85 Z" fill="#a0a3a7"/><rect x="606.3" y="1253" width="1.9" height="13.7" fill="#a0a3a7"/></svg>
<div style="left:487.2px;top:1236px;width:42px;height:48px;background:#533a3f;"></div>
<div class="t" style="left:503.80px;top:1250px;font-size:20px;line-height:20px;color:#f0504f;">1</div>
<div class="t" style="left:2111.90px;top:1250px;font-size:20px;line-height:20px;color:#fff;letter-spacing:-0.347px;">1 - 4 of 4 items</div>
</body></html>
